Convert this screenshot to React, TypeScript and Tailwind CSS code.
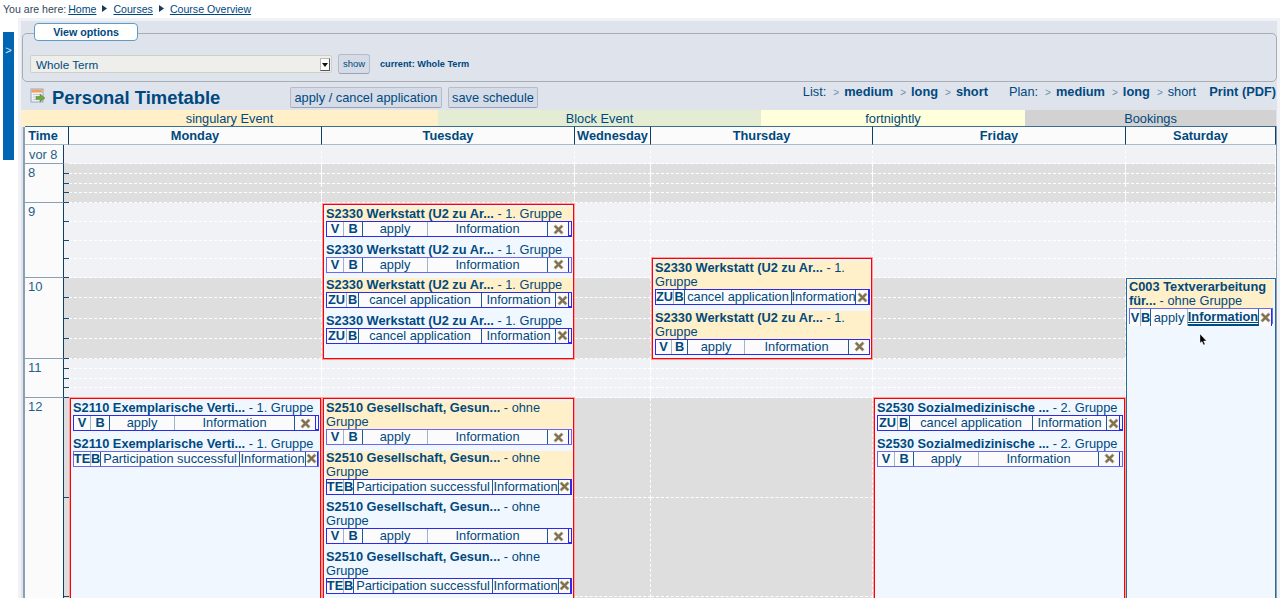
import type { ReactNode } from "react";

const hours = [
  { label: "8", line: 3, gray: true },
  { label: "9", line: 7, gray: false },
  { label: "10", line: 11, gray: true },
  { label: "11", line: 15, gray: false },
  { label: "12", line: 19, gray: true },
];
const days = ["Monday", "Tuesday", "Wednesday", "Thursday", "Friday", "Saturday"];

type Kind = "vb" | "zu" | "te";

function CrossIcon() {
  return (
    <svg width="11" height="11" viewBox="0 0 11 11" className="block">
      <path d="M1.5 1.5 L9.5 9.5 M9.5 1.5 L1.5 9.5" stroke="#b5a98e" strokeWidth="3" />
      <path d="M2 2 L9 9 M9 2 L2 9" stroke="#7f7050" strokeWidth="2" />
    </svg>
  );
}

function Cell({ children, bold, sep, className }: { children: ReactNode; bold?: boolean; sep: string; className?: string }) {
  return (
    <div className={`flex items-center justify-center whitespace-nowrap border-r bg-[#fbfbfb] leading-[14px] ${bold ? "font-bold" : ""} ${sep} ${className ?? ""}`}>
      {children}
    </div>
  );
}

function Actions({ kind, cols, strong, hover }: { kind: Kind; cols: string; strong?: boolean; hover?: boolean }) {
  const first = kind === "vb" ? "V" : kind === "zu" ? "ZU" : "TE";
  const action = kind === "vb" ? "apply" : kind === "zu" ? "cancel application" : "Participation successful";
  return (
    <div className={`grid h-[16px] border ${strong ? "border-[#2b2bf0] border-b-2" : "border-[#6a6aee]"} bg-[#f0f7ff] ${cols}`}>
      <Cell bold sep="border-[#9db4cc]">{first}</Cell>
      <Cell bold sep="border-[#1f5a90]">B</Cell>
      <Cell sep={kind === "vb" ? "border-[#9db4cc]" : "border-[#1f5a90]"}>{action}</Cell>
      <Cell bold={hover} sep="border-[#1f5a90]" className={hover ? "underline border-b-2 border-b-[#004a80] pt-[1px]" : ""}>Information</Cell>
      <Cell sep="border-[#2b2bf0]"><CrossIcon /></Cell>
    </div>
  );
}

function Entry({ code, group, cream, kind, cols, strong, hover }: { code: string; group: string; cream?: boolean; kind: Kind; cols: string; strong?: boolean; hover?: boolean }) {
  return (
    <div className="mb-[5.5px]">
      <div className={`leading-[14px] ${cream ? "bg-[#fff0c9]" : ""}`}>
        <span className="font-bold">{code}</span> - {group}
      </div>
      <Actions kind={kind} cols={cols} strong={strong} hover={hover} />
    </div>
  );
}

const vbWide = "grid-cols-[17px_19px_65px_120px_21px_1fr]";
const zuWide = "grid-cols-[20px_12px_123px_74px_13px_1fr]";
const teWide = "grid-cols-[17px_10px_139px_66px_12px_1fr]";
const vbMid = "grid-cols-[16px_16px_57px_104px_21px_1fr]";
const zuMid = "grid-cols-[18px_11px_107px_64px_13px_1fr]";
const vbSat = "grid-cols-[11px_10px_37px_71px_13px_1fr]";

function EventBox({ col, from, to, className, children }: { col: number; from: number; to: number; className?: string; children: ReactNode }) {
  return (
    <div
      style={{ gridColumn: col, gridRow: `${from} / ${to}` }}
      className={`z-10 mx-[1px] overflow-hidden border border-[#f00] bg-[#f0f7ff] pl-[2px] pr-[1px] pt-[2px] shadow-[0_0_0_1px_#ff9f9f] ${className ?? ""}`}
    >
      {children}
    </div>
  );
}

function Crumb({ children, className }: { children: string; className?: string }) {
  return <a className={`text-[#00497f] underline ${className ?? ""}`}>{children}</a>;
}

function CrumbArrow() {
  return (
    <svg width="5" height="7" viewBox="0 0 5 7" className="mx-[6px] mb-[3px] inline-block">
      <path d="M0 0 L5 3.5 L0 7 Z" fill="#1c3a52" />
    </svg>
  );
}

function TitleIcon() {
  return (
    <svg width="16" height="16" viewBox="0 0 16 16" className="shrink-0">
      <rect x="1" y="1" width="12" height="13" fill="#eef1f6" stroke="#9aa7c0" />
      <rect x="1.5" y="1.5" width="11" height="3" fill="#f0a060" />
      <path d="M3 6.5h8M3 9h8M3 11.5h4" stroke="#c4cbdc" />
      <path d="M6 8.5h4V6l5 4-5 4v-2.5H6z" fill="#6fa83c" stroke="#4f8a2c" strokeWidth="0.5" />
    </svg>
  );
}

function Pick({ children, bold }: { children: string; bold?: boolean }) {
  return (
    <>
      <span className="ml-[7px] mr-[5px] text-[10px] text-[#6f8fa8]">&gt;</span>
      <span className={bold ? "font-bold" : ""}>{children}</span>
    </>
  );
}

export default function App() {
  return (
    <div className="relative h-[598px] w-[1280px] overflow-hidden bg-white font-['Liberation_Sans',Arial,sans-serif] text-[12.8px] text-[#00497f]">
      <div className="h-[18px] pl-[3px] text-[10.6px] leading-[19px] text-[#33475a]">
        You are here: <Crumb className="ml-[-1px]">Home</Crumb>
        <CrumbArrow />
        <Crumb>Courses</Crumb>
        <CrumbArrow />
        <Crumb>Course Overview</Crumb>
      </div>

      <div className="flex">
        <div className="w-[18px] shrink-0 pl-[3px] pt-[14px]">
          <div className="h-[128px] w-[11px] bg-[#0066b3] pt-[12px] text-center text-[11px] leading-[12px] text-[#dbe8f5]">&gt;</div>
        </div>

        <div className="flex-1 bg-[#f1f2f5] pl-[3px] pr-[3px] pt-[3px]">
          <div className="bg-[#dfe3ec]">
            <div className="relative ml-[1px] mt-[12px] inline-block w-[1255px] align-top">
              <div className="absolute left-[12px] top-[-10px] flex h-[18px] w-[104px] items-center justify-center rounded-[4px] border border-[#5d9cc9] bg-white text-[10.7px] font-bold">
                View options
              </div>
              <div className="flex h-[49px] items-center gap-[6px] rounded-[5px] border border-[#a9adb5] pl-[7px] pt-[13px]">
                <div className="flex h-[18px] w-[302px] items-center justify-between rounded-[2px] border border-[#cfcfca] bg-[#eeeeea] pl-[5px] pr-[1px] pt-[1px] text-[11.7px]">
                  Whole Term
                  <div className="flex h-[13px] w-[10px] items-center justify-center border border-[#555] border-l-[#bbb] border-t-[#bbb] bg-white">
                    <svg width="6" height="4" viewBox="0 0 6 4"><path d="M0 0h6L3 4z" fill="#111" /></svg>
                  </div>
                </div>
                <div className="flex h-[20px] w-[32px] items-center justify-center rounded-[3px] border border-[#b5bcc8] border-b-[#9aa3b3] bg-[#d5dce7] text-[9.5px]">show</div>
                <div className="ml-[4px] pt-[2px] text-[9.2px] font-bold">current: Whole Term</div>
              </div>
            </div>

            <div className="flex h-[28px] items-start pt-[2px]">
              <div className="ml-[9px] mt-[4px]"><TitleIcon /></div>
              <div className="ml-[6px] mt-[2px] w-[168px] whitespace-nowrap text-[18.4px] font-bold leading-[24px]">Personal Timetable</div>
              <div className="ml-[70px] mt-[3px] flex h-[21px] w-[152px] items-center justify-center rounded-[2px] border border-[#b5bcc8] border-b-[#9aa3b3] bg-[#d5dce7]">apply / cancel application</div>
              <div className="ml-[6px] mt-[3px] flex h-[21px] w-[90px] items-center justify-center rounded-[2px] border border-[#b5bcc8] border-b-[#9aa3b3] bg-[#d5dce7]">save schedule</div>
              <div className="ml-auto flex items-baseline pr-[1px] pt-[1px] leading-[14px]">
                <span>List:</span>
                <Pick bold>medium</Pick>
                <Pick bold>long</Pick>
                <Pick bold>short</Pick>
                <span className="ml-[21px]">Plan:</span>
                <Pick bold>medium</Pick>
                <Pick bold>long</Pick>
                <Pick>short</Pick>
                <span className="ml-[13px] font-bold">Print (PDF)</span>
              </div>
            </div>

            <div className="grid h-[16px] grid-cols-[417px_323px_264px_251px] text-center leading-[17px]">
              <div className="bg-[#fff0c9]">singulary Event</div>
              <div className="bg-[#e4edd4]">Block Event</div>
              <div className="bg-[#ffffdc]">fortnightly</div>
              <div className="bg-[#d2d2d2]">Bookings</div>
            </div>

            <div className="ml-[2px] grid w-[1254px] grid-cols-[39px_5px_253px_253px_76px_222px_253px_150px] grid-rows-[19px_19px_repeat(4,9.75px)_repeat(4,18.75px)_repeat(4,20.25px)_repeat(4,9.75px)_repeat(4,99.5px)] border-l-2 border-r border-[#8aa0b5]">
              <div className="col-span-2 border-b border-t border-r border-b-[#a8bccc] border-r-[#0f3f66] border-t-[#3d6e92] bg-[#fbfbfb] pr-[7px] text-center font-bold leading-[17px]">Time</div>
              {days.map((d) => (
                <div key={d} className="border-b border-r border-t border-b-[#a8bccc] border-r-[#0f3f66] border-t-[#3d6e92] bg-[#fbfbfb] text-center font-bold leading-[17px]">{d}</div>
              ))}

              <div style={{ gridRow: 2, gridColumn: 1 }} className="border-b border-r border-b-[#8aa0b5] border-r-[#0f3f66] bg-[#fbfbfb] pl-[4px] leading-[20px] text-[#1f5f8b]">vor 8</div>
              <div style={{ gridRow: 2, gridColumn: 2 }} className="border-b border-b-[#dfe3ec] bg-[#f0f2f6]" />
              {days.map((d, i) => (
                <div key={d} style={{ gridRow: 2, gridColumn: i + 3 }} className="border-b border-r border-dashed border-white bg-[#f0f2f6]" />
              ))}

              {hours.map((h) => (
                <div key={h.label} style={{ gridRow: `${h.line} / span 4`, gridColumn: 1 }} className="border-b border-r border-b-[#8aa0b5] border-r-[#0f3f66] bg-[#fbfbfb] pl-[3px] text-[13px] leading-[18px] text-[#1f5f8b]">
                  {h.label}
                </div>
              ))}

              {hours.flatMap((h) =>
                [0, 1, 2, 3].map((q) => (
                  <div
                    key={`${h.label}-${q}`}
                    style={{ gridRow: h.line + q, gridColumn: 2 }}
                    className={`border-b border-b-[#1c4a6e] ${h.gray ? "bg-[#dedede]" : "bg-[#f0f2f6]"}`}
                  />
                )),
              )}

              {hours.flatMap((h) =>
                [0, 1, 2, 3].flatMap((q) =>
                  days.map((d, i) => (
                    <div
                      key={`${h.label}-${q}-${d}`}
                      style={{ gridRow: h.line + q, gridColumn: i + 3 }}
                      className={`border-b border-r border-dashed border-white ${h.gray ? "bg-[#dedede]" : "bg-[#f0f2f6]"}`}
                    />
                  )),
                ),
              )}

              <EventBox col={4} from={7} to={15} className="mt-[1px]">
                <Entry cream code="S2330 Werkstatt (U2 zu Ar..." group="1. Gruppe" kind="vb" cols={vbWide} strong />
                <Entry code="S2330 Werkstatt (U2 zu Ar..." group="1. Gruppe" kind="vb" cols={vbWide} />
                <Entry cream code="S2330 Werkstatt (U2 zu Ar..." group="1. Gruppe" kind="zu" cols={zuWide} strong />
                <Entry code="S2330 Werkstatt (U2 zu Ar..." group="1. Gruppe" kind="zu" cols={zuWide} strong />
              </EventBox>

              <EventBox col={6} from={10} to={15} className="mt-[-1px]">
                <Entry cream code="S2330 Werkstatt (U2 zu Ar..." group="1. Gruppe" kind="zu" cols={zuMid} strong />
                <Entry cream code="S2330 Werkstatt (U2 zu Ar..." group="1. Gruppe" kind="vb" cols={vbMid} strong />
              </EventBox>

              <div style={{ gridColumn: 8, gridRow: "11 / 23" }} className="z-10 border border-[#2b6a95] bg-[#f0f7ff] px-[2px] pt-[1px]">
                <Entry cream code="C003 Textverarbeitung für..." group="ohne Gruppe" kind="vb" cols={vbSat} hover />
              </div>

              <EventBox col={3} from={19} to={23}>
                <Entry code="S2110 Exemplarische Verti..." group="1. Gruppe" kind="vb" cols={vbWide} strong />
                <Entry code="S2110 Exemplarische Verti..." group="1. Gruppe" kind="te" cols={teWide} />
              </EventBox>

              <EventBox col={4} from={19} to={23}>
                <Entry cream code="S2510 Gesellschaft, Gesun..." group="ohne Gruppe" kind="vb" cols={vbWide} />
                <Entry cream code="S2510 Gesellschaft, Gesun..." group="ohne Gruppe" kind="te" cols={teWide} strong />
                <Entry code="S2510 Gesellschaft, Gesun..." group="ohne Gruppe" kind="vb" cols={vbWide} strong />
                <Entry code="S2510 Gesellschaft, Gesun..." group="ohne Gruppe" kind="te" cols={teWide} strong />
              </EventBox>

              <EventBox col={7} from={19} to={23}>
                <Entry code="S2530 Sozialmedizinische ..." group="2. Gruppe" kind="zu" cols={zuWide} strong />
                <Entry code="S2530 Sozialmedizinische ..." group="2. Gruppe" kind="vb" cols={vbWide} />
              </EventBox>
            </div>
          </div>
        </div>
      </div>

      <svg width="9" height="12" viewBox="0 0 9 12" className="absolute left-[1199px] top-[334px] z-20">
        <path d="M1 0 L1 9 L3 7.5 L4.5 11 L6 10.3 L4.6 7 L7.5 7 Z" fill="#000" stroke="#fff" strokeWidth="0.4" />
      </svg>
    </div>
  );
}
